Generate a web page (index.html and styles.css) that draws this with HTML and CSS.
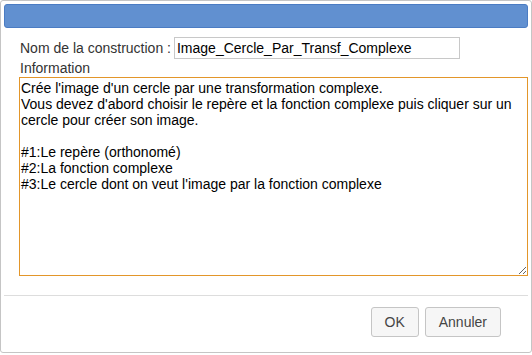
FILE: index.html
```html
<!DOCTYPE html>
<html lang="fr">
<head>
    <meta charset="UTF-8">
    <title>Construction</title>
    <link rel="stylesheet" href="styles.css">
</head>
<body>
    <div class="dialog">
        <div class="titlebar"></div>
        <div class="content">
            <div class="name-row">
                <label for="nom">Nom de la construction :</label>
                <input type="text" id="nom" value="Image_Cercle_Par_Transf_Complexe">
            </div>
            <div class="info-label">Information</div>
            <textarea class="info">Crée l'image d'un cercle par une transformation complexe.
Vous devez d'abord choisir le repère et la fonction complexe puis cliquer sur un cercle pour créer son image.

#1:Le repère (orthonomé)
#2:La fonction complexe
#3:Le cercle dont on veut l'image par la fonction complexe</textarea>
        </div>
        <div class="buttonpane">
            <button>OK</button>
            <button>Annuler</button>
        </div>
    </div>
</body>
</html>
```
FILE: styles.css
```css
body {
    margin: 0;
    background: #fff;
    font-family: "Liberation Sans", Arial, sans-serif;
    font-size: 14px;
    color: #333;
}
.dialog {
    width: 532px;
    height: 353px;
    box-sizing: border-box;
    border: 1px solid #c5c5c5;
    border-radius: 3px;
    padding: 3px;
    display: flex;
    flex-direction: column;
    background: #fff;
}
.titlebar {
    height: 22px;
    background: #6190d0;
    border: 1px solid #4b7cc3;
    border-radius: 3px;
}
.content {
    padding: 9px 0 0 15px;
    flex: 1;
}
.name-row {
    display: flex;
    align-items: center;
    margin-left: 1px;
}
.name-row label {
    margin-right: 3px;
}
.name-row input {
    width: 286px;
    height: 22px;
    box-sizing: border-box;
    border: 1px solid #c8c8c8;
    padding: 1px 2px;
    font-family: inherit;
    font-size: 14px;
    color: #000;
}
.info-label {
    margin: 1px 0 0 1px;
    line-height: 17px;
}
.info {
    display: block;
    width: 509px;
    height: 199px;
    box-sizing: border-box;
    border: 1px solid #e3962a;
    outline: none;
    padding: 2px 1px;
    margin: 0;
    resize: both;
    font-family: inherit;
    font-size: 14px;
    line-height: 16px;
    color: #000;
}
.buttonpane {
    border-top: 1px solid #ddd;
    padding: 11px 27px 12px 0;
    display: flex;
    justify-content: flex-end;
    gap: 6px;
}
.buttonpane button {
    height: 30px;
    padding: 0 13px;
    background: #f6f6f6;
    border: 1px solid #c5c5c5;
    border-radius: 3px;
    font-family: inherit;
    font-size: 14px;
    color: #454545;
}
```
